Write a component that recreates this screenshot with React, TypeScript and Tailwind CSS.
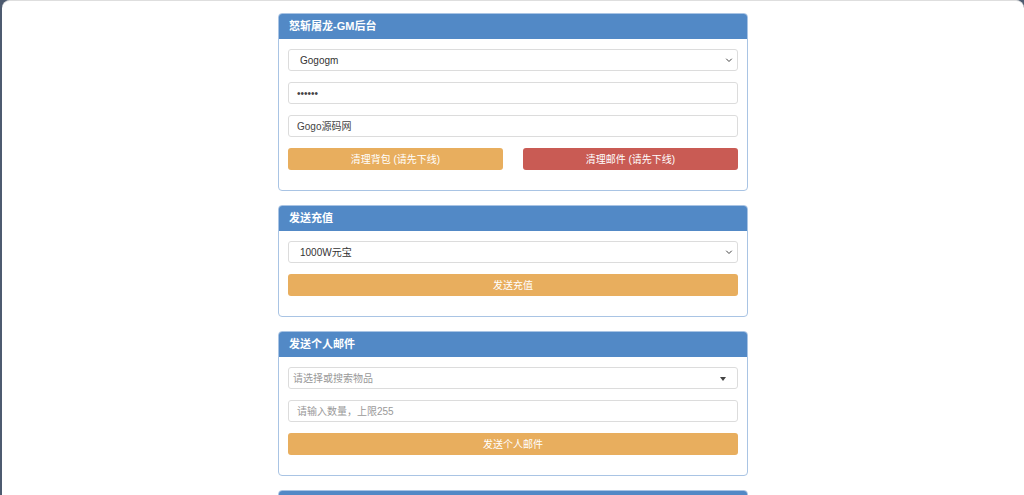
import React from "react"

const font = { fontFamily: '"Liberation Sans", "Noto Sans CJK SC", sans-serif' }

function Chevron() {
  return (
    <svg className="pointer-events-none absolute right-[4px] top-1/2 -translate-y-1/2" width="8" height="8" viewBox="0 0 16 16">
      <path d="M3 6l5 5 5-5" fill="none" stroke="#444" strokeWidth="2" strokeLinecap="round" strokeLinejoin="round" />
    </svg>
  )
}

function Panel({ title, children }: { title: string; children?: React.ReactNode }) {
  return (
    <div className="rounded-[4px] border border-[#a9c4e4] bg-white overflow-hidden">
      <div className="h-[25px] bg-[#5289c6] px-[10px] flex items-center text-white text-[11px] font-bold">{title}</div>
      {children && <div className="px-[9px] pt-[10px] pb-[20px] flex flex-col gap-[11px]">{children}</div>}
    </div>
  )
}

function FakeSelect({ value, placeholder, caret }: { value?: string; placeholder?: string; caret?: boolean }) {
  return (
    <div className="relative h-[22px] rounded-[3px] border border-[#dcdcdc] bg-white flex items-center text-[10px]">
      {value ? (
        <span className="pl-[11px] text-[#333]">{value}</span>
      ) : (
        <span className="pl-[4px] text-[#999]">{placeholder}</span>
      )}
      {caret ? (
        <span className="absolute right-[11px] top-[9px] w-0 h-0 border-l-[3px] border-r-[3px] border-t-[4px] border-l-transparent border-r-transparent border-t-[#444]" />
      ) : (
        <Chevron />
      )}
    </div>
  )
}

function Field({ value, placeholder }: { value?: string; placeholder?: string }) {
  return (
    <div className="h-[22px] rounded-[3px] border border-[#dcdcdc] bg-white flex items-center pl-[8px] text-[10px]">
      {value ? <span className="text-[#444]">{value}</span> : <span className="text-[#999]">{placeholder}</span>}
    </div>
  )
}

function Btn({ label, red }: { label: string; red?: boolean }) {
  return (
    <button
      className={
        "h-[22px] w-full rounded-[3px] text-white text-[10px] flex items-center justify-center " +
        (red ? "bg-[#c95b54]" : "bg-[#e8ae5e]")
      }
    >
      {label}
    </button>
  )
}

export default function App() {
  return (
    <div className="h-[495px] w-[1024px] bg-[#4d5b70] overflow-hidden" style={font}>
      <div className="ml-[2px] h-full bg-white rounded-t-[8px] border-t border-[#dedede] pt-[12px]">
        <div className="w-[470px] mx-auto flex flex-col gap-[14px]">
          <Panel title="怒斩屠龙-GM后台">
            <FakeSelect value="Gogogm" />
            <Field value="••••••" />
            <Field value="Gogo源码网" />
            <div className="grid grid-cols-2 gap-5">
              <Btn label="清理背包 (请先下线)" />
              <Btn label="清理邮件 (请先下线)" red />
            </div>
          </Panel>

          <Panel title="发送充值">
            <FakeSelect value="1000W元宝" />
            <Btn label="发送充值" />
          </Panel>

          <Panel title="发送个人邮件">
            <FakeSelect placeholder="请选择或搜索物品" caret />
            <Field placeholder="请输入数量，上限255" />
            <Btn label="发送个人邮件" />
          </Panel>

          <Panel title="" />
        </div>
      </div>
    </div>
  )
}
